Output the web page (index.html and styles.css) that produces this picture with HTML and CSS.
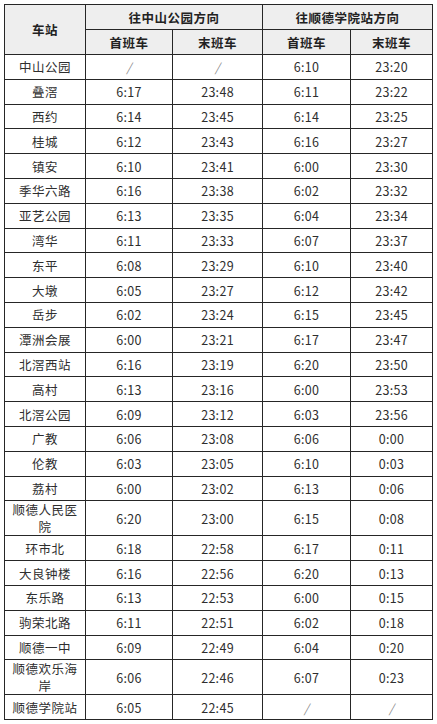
FILE: index.html
```html
<!DOCTYPE html>
<html lang="zh-CN">
<head>
<meta charset="utf-8">
<title>首末班车时刻表</title>
<link rel="stylesheet" href="styles.css">
</head>
<body>
<div class="frame">
<table class="timetable">
  <colgroup>
    <col class="c-station"><col class="c-a1"><col class="c-a2"><col class="c-b1"><col class="c-b2">
  </colgroup>
  <thead>
    <tr class="hrow">
      <th rowspan="2">车站</th>
      <th colspan="2">往中山公园方向</th>
      <th colspan="2">往顺德学院站方向</th>
    </tr>
    <tr class="hrow">
      <th>首班车</th><th>末班车</th><th>首班车</th><th>末班车</th>
    </tr>
  </thead>
  <tbody>
    <tr><td class="st">中山公园</td><td class="na">/</td><td class="na">/</td><td>6:10</td><td>23:20</td></tr>
    <tr><td class="st">叠滘</td><td>6:17</td><td>23:48</td><td>6:11</td><td>23:22</td></tr>
    <tr><td class="st">西约</td><td>6:14</td><td>23:45</td><td>6:14</td><td>23:25</td></tr>
    <tr><td class="st">桂城</td><td>6:12</td><td>23:43</td><td>6:16</td><td>23:27</td></tr>
    <tr><td class="st">镇安</td><td>6:10</td><td>23:41</td><td>6:00</td><td>23:30</td></tr>
    <tr><td class="st">季华六路</td><td>6:16</td><td>23:38</td><td>6:02</td><td>23:32</td></tr>
    <tr><td class="st">亚艺公园</td><td>6:13</td><td>23:35</td><td>6:04</td><td>23:34</td></tr>
    <tr><td class="st">湾华</td><td>6:11</td><td>23:33</td><td>6:07</td><td>23:37</td></tr>
    <tr><td class="st">东平</td><td>6:08</td><td>23:29</td><td>6:10</td><td>23:40</td></tr>
    <tr><td class="st">大墩</td><td>6:05</td><td>23:27</td><td>6:12</td><td>23:42</td></tr>
    <tr><td class="st">岳步</td><td>6:02</td><td>23:24</td><td>6:15</td><td>23:45</td></tr>
    <tr><td class="st">潭洲会展</td><td>6:00</td><td>23:21</td><td>6:17</td><td>23:47</td></tr>
    <tr><td class="st">北滘西站</td><td>6:16</td><td>23:19</td><td>6:20</td><td>23:50</td></tr>
    <tr><td class="st">高村</td><td>6:13</td><td>23:16</td><td>6:00</td><td>23:53</td></tr>
    <tr><td class="st">北滘公园</td><td>6:09</td><td>23:12</td><td>6:03</td><td>23:56</td></tr>
    <tr><td class="st">广教</td><td>6:06</td><td>23:08</td><td>6:06</td><td>0:00</td></tr>
    <tr><td class="st">伦教</td><td>6:03</td><td>23:05</td><td>6:10</td><td>0:03</td></tr>
    <tr><td class="st">荔村</td><td>6:00</td><td>23:02</td><td>6:13</td><td>0:06</td></tr>
    <tr class="tall"><td class="st">顺德人民医院</td><td>6:20</td><td>23:00</td><td>6:15</td><td>0:08</td></tr>
    <tr><td class="st">环市北</td><td>6:18</td><td>22:58</td><td>6:17</td><td>0:11</td></tr>
    <tr><td class="st">大良钟楼</td><td>6:16</td><td>22:56</td><td>6:20</td><td>0:13</td></tr>
    <tr><td class="st">东乐路</td><td>6:13</td><td>22:53</td><td>6:00</td><td>0:15</td></tr>
    <tr><td class="st">驹荣北路</td><td>6:11</td><td>22:51</td><td>6:02</td><td>0:18</td></tr>
    <tr><td class="st">顺德一中</td><td>6:09</td><td>22:49</td><td>6:04</td><td>0:20</td></tr>
    <tr class="tall"><td class="st">顺德欢乐海岸</td><td>6:06</td><td>22:46</td><td>6:07</td><td>0:23</td></tr>
    <tr><td class="st">顺德学院站</td><td>6:05</td><td>22:45</td><td class="na">/</td><td class="na">/</td></tr>
  </tbody>
</table>
</div>
</body>
</html>
```
FILE: styles.css
```css
html, body {
  margin: 0;
  padding: 0;
  background: #ffffff;
}

.frame {
  padding: 4px 0 0 4px;
}

.timetable {
  border-collapse: collapse;
  table-layout: fixed;
  width: 428px;
  font-family: "Noto Sans CJK SC", "Noto Sans", sans-serif;
  color: #2e2e2e;
}

.c-station { width: 81px; }
.c-a1 { width: 87px; }
.c-a2 { width: 90px; }
.c-b1 { width: 88px; }
.c-b2 { width: 82px; }

.timetable th,
.timetable td {
  border: 1px solid #262626;
  text-align: center;
  vertical-align: middle;
  padding: 0 4px;
  line-height: 17px;
}

.timetable th {
  background: #eeeeee;
  font-weight: 700;
  font-size: 12.5px;
  color: #222222;
  letter-spacing: 0.5px;
}

.hrow { height: 25px; }

.timetable tbody tr { height: 24.8px; }
.timetable tbody tr.tall { height: 34px; }

.timetable td {
  font-size: 12.5px;
  letter-spacing: 0.3px;
}

.timetable td.st {
  font-size: 12.5px;
  letter-spacing: 0.5px;
}

.timetable td.na {
  color: #8a8a8a;
  font-style: italic;
  font-size: 12px;
}
```
